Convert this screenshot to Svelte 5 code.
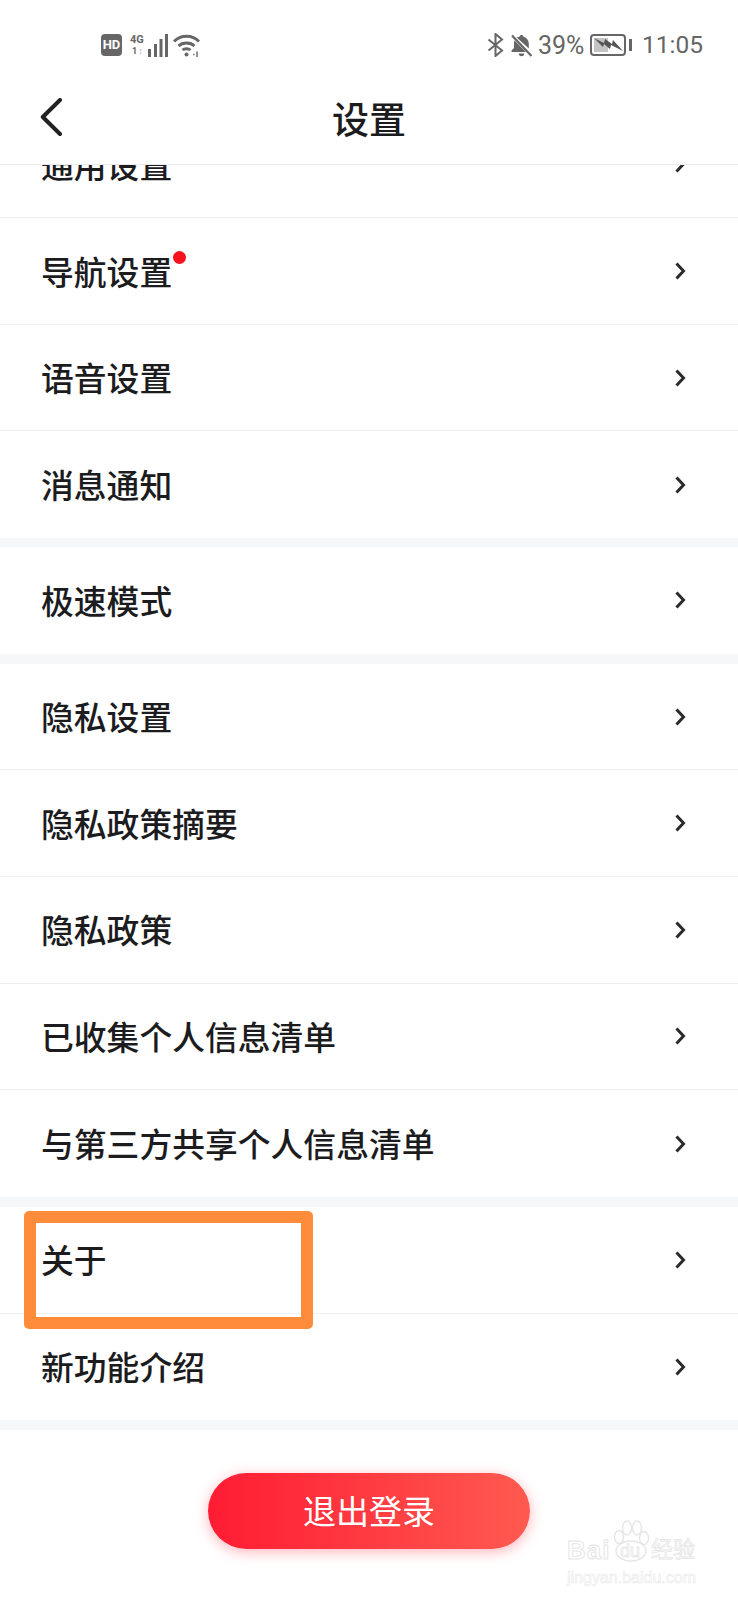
<script lang="ts">
  const sections = [
    ['通用设置', '导航设置', '语音设置', '消息通知'],
    ['极速模式'],
    ['隐私设置', '隐私政策摘要', '隐私政策', '已收集个人信息清单', '与第三方共享个人信息清单'],
    ['关于', '新功能介绍']
  ];
</script>

<div class="page">
  <div class="top">
    <div class="status">
      <div class="status-left">
        <span class="hd">HD</span>
        <div class="net">
          <span>4G</span>
          <span class="net-sub">1<i>↕</i></span>
        </div>
        <svg class="signal" width="22" height="23" viewBox="0 0 22 23" fill="#666">
          <rect x="1" y="15" width="3" height="8" />
          <rect x="7" y="10" width="3" height="13" />
          <rect x="12.500" y="5" width="3" height="18" />
          <rect x="18" y="0" width="3" height="23" />
        </svg>
        <svg class="wifi" width="27" height="23" viewBox="0 0 27 23" fill="none" stroke="#666" stroke-width="2.800">
          <path d="M1 7.500C7.500 .5 19.500 .5 26 7.500" />
          <path d="M5.500 12C9.500 8 17.500 8 21.500 12" />
          <path d="M9.500 16C11.500 14.300 15.500 14.300 17.500 16" />
          <circle cx="13.500" cy="20.500" r="2" fill="#666" stroke="none" />
          <path d="M20 20.500h1.500M24 17.500v6" stroke="#777" stroke-width="1.600" />
        </svg>
      </div>
      <div class="status-right">
        <svg width="17" height="24" viewBox="0 0 17 24" fill="none" stroke="#666" stroke-width="2">
          <path d="M1.500 6.500 15 17.500 8.500 23V1L15 6.500 1.500 17.500" />
        </svg>
        <svg class="bell" width="23" height="23" viewBox="0 0 23 23">
          <path d="M11.500 1c1 0 1.800.7 2 1.700 3.500 1 5.300 3.800 5.300 7.300v4.500L6.700 3.400c.9-.4 1.900-.6 2.800-.7.200-1 1-1.700 2-1.700zM4.300 6.200 16 18H1.500v-1.500L4 14V9.500c0-1.200.1-2.300.3-3.300zM8.800 19.500h5.400a2.700 2.700 0 0 1-5.400 0z" fill="#666" />
          <path d="M2 1.500 21.500 22" stroke="#666" stroke-width="2.200" />
        </svg>
        <span class="pct">39%</span>
        <div class="battery">
          <div class="shell">
            <div class="charge"></div>
            <svg class="bolt" width="32" height="18" viewBox="0 0 32 18">
              <path d="M1 2 11 7l1-4 7 5 1-4 10 11-12-6-1 4-6-5-1 3z" fill="#555" />
            </svg>
          </div>
          <span class="tip"></span>
        </div>
        <span class="time">11:05</span>
      </div>
    </div>
    <header>
      <svg class="back" width="26" height="40" viewBox="0 0 26 40" fill="none" stroke="#222" stroke-width="4" stroke-linecap="round" stroke-linejoin="round">
        <path d="M21 2 3.800 19 21 36" />
      </svg>
      <h1>设置</h1>
    </header>
  </div>

  <div class="list">
    {#each sections as rows}
      <section>
        {#each rows as label}
          <div class="row">
            <span class="label">
              {label}
              {#if label === '导航设置'}<i class="dot"></i>{/if}
            </span>
            <svg width="11" height="18" viewBox="0 0 11 18" fill="none" stroke="#2a2a2a" stroke-width="3">
              <path d="M1.500 1.500 8.500 9 1.500 16.500" />
            </svg>
          </div>
        {/each}
      </section>
    {/each}
  </div>

  <div class="logout-wrap">
    <button class="logout">退出登录</button>
  </div>

  <div class="highlight"></div>

  <div class="watermark">
    <div class="wm-brand">
      <span class="wm-bai">Bai</span>
      <div class="wm-paw">
        <svg width="38" height="42" viewBox="0 0 38 42" fill="#fff" stroke="#e6e6e6" stroke-width="1.400">
          <ellipse cx="7" cy="17" rx="4.500" ry="6.500" />
          <ellipse cx="15" cy="8" rx="4.500" ry="7" />
          <ellipse cx="25" cy="8" rx="4.500" ry="7" />
          <ellipse cx="32" cy="18" rx="4.500" ry="6.500" />
          <ellipse cx="19" cy="31" rx="15" ry="10" />
        </svg>
        <span class="wm-du">du</span>
      </div>
      <span class="wm-cn">经验</span>
    </div>
    <div class="wm-url">jingyan.baidu.com</div>
  </div>
</div>

<style>
  :global(body) {
    margin: 0;
    background: #fff;
  }
  .page {
    position: relative;
    width: 738px;
    height: 1600px;
    overflow: hidden;
    background: #fff;
    font-family: "Noto Sans CJK SC", "Noto Sans", sans-serif;
    color: #1c1c1e;
  }

  .top {
    position: relative;
    z-index: 1;
    height: 164px;
    background: #fff;
    border-bottom: 1px solid #e9ebec;
  }
  .status {
    height: 90px;
    display: flex;
    align-items: center;
    justify-content: space-between;
    padding: 0 35px 0 101px;
    color: #666;
  }
  .status-left, .status-right {
    display: flex;
    align-items: center;
  }
  .hd {
    width: 21px;
    height: 22px;
    border-radius: 4px;
    background: #666;
    color: #fff;
    font: 700 13px/22px "Roboto", sans-serif;
    text-align: center;
  }
  .net {
    width: 16px;
    margin-left: 8px;
    display: flex;
    flex-direction: column;
    gap: 2px;
    color: #666;
    font: 700 11px/10px "Roboto", sans-serif;
  }
  .net-sub {
    font-size: 9px;
    line-height: 9px;
    padding-left: 2px;
  }
  .net-sub i {
    font-style: normal;
    color: #aaa;
    margin-left: 1px;
  }
  .signal {
    margin-left: 1px;
  }
  .wifi {
    margin-left: 4px;
  }
  .status-right {
    font: 400 24.5px/1 "Roboto", sans-serif;
  }
  .bell {
    margin-left: 6px;
  }
  .pct {
    width: 46px;
    margin-left: 5px;
    font-size: 25px;
  }
  .battery {
    display: flex;
    align-items: center;
    margin-left: 6px;
  }
  .shell {
    position: relative;
    box-sizing: border-box;
    width: 36px;
    height: 22px;
    border: 2px solid #666;
    border-radius: 4px;
  }
  .charge {
    width: 14px;
    height: 14px;
    margin: 2px;
    background: #c4c4c4;
  }
  .bolt {
    position: absolute;
    left: 1px;
    top: 0;
  }
  .tip {
    width: 3px;
    height: 12px;
    margin-left: 3px;
    background: #666;
  }
  .time {
    margin-left: 10px;
  }

  header {
    position: relative;
    box-sizing: border-box;
    height: 74px;
    padding-bottom: 18px;
    display: flex;
    align-items: center;
    justify-content: center;
  }
  .back {
    position: absolute;
    left: 39px;
    top: 8px;
  }
  h1 {
    margin: 0;
    font-size: 37px;
    font-weight: 500;
    color: #1c1c1e;
  }

  .list {
    margin-top: -53.5px;
  }
  section {
    margin-bottom: 10px;
    background: #fff;
    box-shadow: 0 10px 0 #f6f7f9;
  }
  section:first-child {
    margin-bottom: 9px;
  }
  .row {
    box-sizing: border-box;
    height: 106.65px;
    padding: 0 52px 0 41px;
    display: flex;
    align-items: center;
    justify-content: space-between;
    border-bottom: 1px solid #eeeff0;
  }
  .row:last-child {
    border-bottom: 0;
  }
  .label {
    position: relative;
    font-size: 32.8px;
    font-weight: 500;
    line-height: 1;
    color: #1c1c1e;
  }
  .dot {
    position: absolute;
    right: -14px;
    top: -4px;
    width: 13px;
    height: 13px;
    border-radius: 50%;
    background: #f5141e;
  }

  .logout-wrap {
    display: flex;
    justify-content: center;
    padding-top: 43px;
  }
  .logout {
    width: 322px;
    height: 76px;
    padding: 0 0 2px;
    border: 0;
    border-radius: 38px;
    background: linear-gradient(90deg, #ff1c33, #ff5a50);
    box-shadow: 0 3px 14px rgba(255, 40, 60, 0.35);
    color: #fff;
    font: 400 33px "Noto Sans CJK SC", sans-serif;
  }

  .highlight {
    position: absolute;
    z-index: 2;
    left: 24px;
    top: 1211px;
    box-sizing: border-box;
    width: 289px;
    height: 118px;
    border: 12px solid #ff8c3a;
    border-radius: 5px;
  }

  .watermark {
    position: absolute;
    z-index: 2;
    left: 567px;
    top: 1520px;
    color: transparent;
    font-family: "Liberation Sans", "Noto Sans CJK SC", sans-serif;
  }
  .wm-brand {
    display: flex;
    align-items: flex-end;
    height: 43px;
    white-space: nowrap;
  }
  .wm-bai {
    width: 45px;
    font-size: 26px;
    line-height: 26px;
    font-weight: 700;
    letter-spacing: 1px;
    -webkit-text-stroke: 1px #e6e6e6;
  }
  .wm-paw {
    position: relative;
    width: 39px;
    height: 43px;
  }
  .wm-du {
    position: absolute;
    left: 8px;
    bottom: 3px;
    font-size: 18px;
    line-height: 18px;
    -webkit-text-stroke: 0.8px #e6e6e6;
  }
  .wm-cn {
    font-size: 22px;
    line-height: 26px;
    -webkit-text-stroke: 0.8px #e6e6e6;
  }
  .wm-url {
    margin-top: 5px;
    font-size: 16px;
    line-height: 20px;
    white-space: nowrap;
    -webkit-text-stroke: 0.6px #eaeaea;
  }
</style>
